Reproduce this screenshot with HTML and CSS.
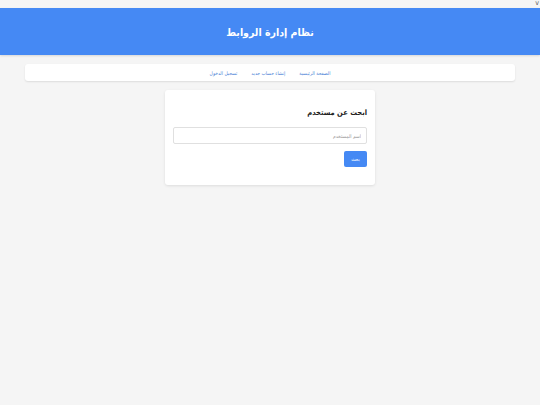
FILE: index.html
```html
<!DOCTYPE html>
<html lang="ar" dir="rtl">
<head>
<meta charset="utf-8">
<title>نظام إدارة الروابط</title>
<link rel="stylesheet" href="styles.css">
</head>
<body>
<div class="topline">v</div>
<header class="header">
  <h1 class="title">نظام إدارة الروابط</h1>
</header>
<nav class="nav">
  <a class="nav-link" href="#">الصفحة الرئيسية</a>
  <a class="nav-link" href="#">إنشاء حساب جديد</a>
  <a class="nav-link" href="#">تسجيل الدخول</a>
</nav>
<main class="card">
  <h2 class="card-title">ابحث عن مستخدم</h2>
  <form class="search-form">
    <input class="input" type="text" placeholder="اسم المستخدم">
    <button class="btn" type="button">بحث</button>
  </form>
</main>
</body>
</html>
```
FILE: styles.css
```css
* { box-sizing: border-box; }
html, body { margin: 0; padding: 0; }
body {
  background: #f5f5f5;
  font-family: "DejaVu Sans Condensed", "DejaVu Sans", Arial, sans-serif;
  color: #333;
  width: 540px;
  height: 405px;
}
.topline {
  height: 8px;
  font-size: 7px;
  line-height: 7px;
  color: #555;
  padding-right: 1px;
  direction: ltr;
  text-align: right;
}
.header {
  height: 47px;
  background: #4589f4;
  display: flex;
  align-items: center;
  justify-content: center;
  box-shadow: 0 1px 2px rgba(0,0,0,0.12);
}
.title {
  margin: 0;
  color: #fff;
  font-size: 10.5px;
  font-weight: bold;
}
.nav {
  margin: 9px 25px 0;
  height: 17px;
  background: #fff;
  border-radius: 3px;
  box-shadow: 0 1px 2px rgba(0,0,0,0.1);
  display: flex;
  justify-content: center;
  align-items: center;
  gap: 14px;
}
.nav-link {
  color: #4a7fd6;
  font-size: 5px;
  text-decoration: none;
}
.card {
  width: 210px;
  margin: 9px auto 0;
  background: #fff;
  border-radius: 3px;
  box-shadow: 0 1px 3px rgba(0,0,0,0.1);
  padding: 17px 8px 18px;
}
.card-title {
  margin: 0 0 8px;
  font-size: 7.5px;
  line-height: 12px;
  font-weight: bold;
  color: #222;
}
.search-form {
  display: flex;
  flex-direction: column;
  align-items: flex-start;
  gap: 7px;
}
.input {
  width: 100%;
  height: 17px;
  border: 1px solid #e0e0e0;
  border-radius: 2px;
  padding: 0 5px;
  font-family: inherit;
  font-size: 5px;
  color: #333;
  background: #fff;
}
.input::placeholder { color: #999; }
.btn {
  width: 23px;
  height: 16px;
  background: #4589f4;
  border: none;
  border-radius: 2px;
  color: #fff;
  font-family: inherit;
  font-size: 5px;
  padding: 0;
}
```
